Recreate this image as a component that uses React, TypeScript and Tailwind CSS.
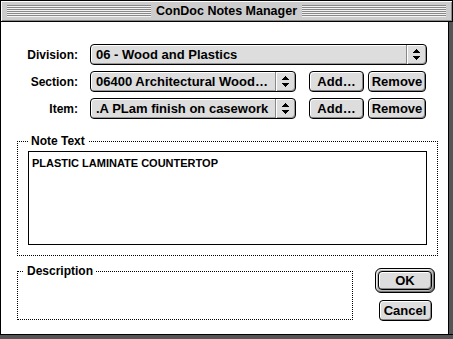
import React from "react";

function Arrows() {
  return (
    <svg width="7" height="11" viewBox="0 0 7 11" shapeRendering="crispEdges">
      <rect x="3" y="0" width="1" height="1" fill="#000" />
      <rect x="2" y="1" width="3" height="1" fill="#000" />
      <rect x="1" y="2" width="5" height="1" fill="#000" />
      <rect x="0" y="3" width="7" height="1" fill="#000" />
      <rect x="0" y="7" width="7" height="1" fill="#000" />
      <rect x="1" y="8" width="5" height="1" fill="#000" />
      <rect x="2" y="9" width="3" height="1" fill="#000" />
      <rect x="3" y="10" width="1" height="1" fill="#000" />
    </svg>
  );
}

function Popup({ text, w }: { text: string; w: string }) {
  return (
    <div
      className={`${w} h-[21px] flex rounded-[4px] border border-black bg-[#dddddd] shadow-[inset_1px_1px_0_#fff,inset_-1px_-1px_0_#999]`}
    >
      <span className="flex-1 pl-[5px] text-[13px] leading-[19px] whitespace-nowrap overflow-hidden">{text}</span>
      <span className="w-[20px] flex items-center justify-center border-l border-[#888] shadow-[inset_1px_0_0_#fff]">
        <Arrows />
      </span>
    </div>
  );
}

function Btn({ label, w }: { label: string; w: string }) {
  return (
    <div
      className={`${w} h-[21px] flex items-center justify-center rounded-[4px] border border-black bg-[#dddddd] text-[13px] shadow-[inset_1px_1px_0_#fff,inset_-1px_-1px_0_#888]`}
    >
      {label}
    </div>
  );
}

function Stripes() {
  return (
    <div className="flex-1 h-[12px] bg-[repeating-linear-gradient(to_bottom,#888_0px,#888_1px,#f2f2f2_1px,#f2f2f2_2px)]" />
  );
}

export default function App() {
  return (
    <div className="w-[453px] h-[339px] flex flex-col bg-white text-black text-[12px] font-bold font-['Liberation_Sans',Arial,sans-serif]">
      {/* Title bar */}
      <div className="h-[22px] flex items-center px-[6px] gap-[4px] bg-[#cccccc] border border-black shadow-[inset_1px_1px_0_#fff,inset_-1px_-1px_0_#888]">
        <Stripes />
        <span className="leading-[14px] text-[12.5px] px-[1px]">ConDoc Notes Manager</span>
        <Stripes />
      </div>

      <div className="flex flex-1">
        <div className="w-px bg-black" />
        <div className="flex-1 flex flex-col">
          {/* Selector rows */}
          <div className="flex flex-col gap-[6px] mt-[22px]">
            <div className="flex items-center">
              <span className="w-[77px] text-right">Division:</span>
              <div className="ml-[12px]">
                <Popup text="06 - Wood and Plastics" w="w-[337px]" />
              </div>
            </div>
            <div className="flex items-center">
              <span className="w-[77px] text-right">Section:</span>
              <div className="ml-[12px]">
                <Popup text="06400 Architectural Wood…" w="w-[206px]" />
              </div>
              <div className="ml-[13px]">
                <Btn label="Add…" w="w-[55px]" />
              </div>
              <div className="ml-[4px]">
                <Btn label="Remove" w="w-[58px]" />
              </div>
            </div>
            <div className="flex items-center">
              <span className="w-[77px] text-right">Item:</span>
              <div className="ml-[12px]">
                <Popup text=".A PLam finish on casework" w="w-[206px]" />
              </div>
              <div className="ml-[13px]">
                <Btn label="Add…" w="w-[55px]" />
              </div>
              <div className="ml-[4px]">
                <Btn label="Remove" w="w-[58px]" />
              </div>
            </div>
          </div>

          {/* Note Text group */}
          <div className="relative ml-[16px] mt-[22px] w-[421px] h-[115px] border border-dotted border-black">
            <span className="absolute left-[10px] -top-[8px] bg-white px-[3px] leading-[14px]">Note Text</span>
            <div className="ml-[10px] mt-[9px] w-[399px] h-[94px] border border-black px-[3px] pt-[5px] text-[11px] leading-[13px]">
              PLASTIC LAMINATE COUNTERTOP
            </div>
          </div>

          {/* Bottom row */}
          <div className="flex items-start mt-[12px]">
            <div className="relative ml-[16px] mt-[3px] w-[336px] h-[49px] border border-dotted border-black">
              <span className="absolute left-[6px] -top-[8px] bg-white px-[3px] leading-[14px]">Description</span>
            </div>
            <div className="ml-[22px] flex flex-col items-center">
              <div className="w-[60px] h-[25px] p-[2px] rounded-[6px] border border-black bg-[#bbbbbb] shadow-[inset_1px_1px_0_#eee,inset_-1px_-1px_0_#777]">
                <div className="h-full flex items-center justify-center rounded-[4px] border border-black bg-[#dddddd] text-[13px] shadow-[inset_1px_1px_0_#fff,inset_-1px_-1px_0_#888]">
                  OK
                </div>
              </div>
              <div className="mt-[7px]">
                <Btn label="Cancel" w="w-[53px]" />
              </div>
            </div>
          </div>
        </div>
        <div className="w-px bg-black" />
        <div className="w-[4px] bg-[#555555]" />
      </div>
      <div className="h-px bg-black" />
      <div className="h-[4px] bg-[#555555]" />
    </div>
  );
}
